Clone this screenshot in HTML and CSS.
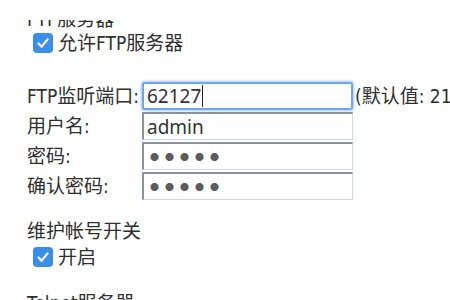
FILE: index.html
```html
<!DOCTYPE html>
<html lang="zh-CN">
<head>
    <meta charset="UTF-8">
    <title>服务器设置</title>
    <link rel="stylesheet" href="styles.css">
</head>
<body>
    <div class="top-cover"></div>
    <div class="page">
        <!-- FTP -->
        <div class="section-title">FTP服务器</div>
        <label class="check-row">
            <span class="check"><svg viewBox="0 0 20 20" width="20" height="20"><path d="M5.5 10.5 L8.6 13.6 L14.6 6.4" fill="none" stroke="#fff" stroke-width="2.2" stroke-linecap="round" stroke-linejoin="round"/></svg></span>
            允许FTP服务器
        </label>

        <div class="form">
            <div class="label">FTP监听端口:</div>
            <div class="field focused"><span class="value">62127</span><span class="caret"></span></div>
            <div class="hint">(默认值: 21)</div>

            <div class="label">用户名:</div>
            <div class="field"><span class="value">admin</span></div>
            <div></div>

            <div class="label">密码:</div>
            <div class="field"><span class="dots">●●●●●</span></div>
            <div></div>

            <div class="label">确认密码:</div>
            <div class="field"><span class="dots">●●●●●</span></div>
            <div></div>
        </div>

        <!-- 维护帐号 -->
        <div class="section-title second">维护帐号开关</div>
        <label class="check-row tight">
            <span class="check"><svg viewBox="0 0 20 20" width="20" height="20"><path d="M5.5 10.5 L8.6 13.6 L14.6 6.4" fill="none" stroke="#fff" stroke-width="2.2" stroke-linecap="round" stroke-linejoin="round"/></svg></span>
            开启
        </label>

        <div class="section-title third">Telnet服务器</div>
    </div>
</body>
</html>
```

FILE: styles.css
```css
* {
    margin: 0;
    padding: 0;
    box-sizing: border-box;
}

body {
    background: #fff;
    color: #2e2e2e;
    font-family: "DejaVu Sans Condensed", "Noto Sans CJK SC", sans-serif;
    font-size: 19px;
    line-height: 22px;
    overflow: hidden;
    height: 300px;
}

.top-cover {
    position: fixed;
    top: 0;
    left: 0;
    right: 0;
    height: 20px;
    background: #fff;
    z-index: 2;
}

.page {
    padding: 8px 0 0 27px;
    white-space: nowrap;
}

.check-row {
    display: flex;
    align-items: center;
    gap: 5px;
    margin: 2px 0 0 6px;
    height: 22px;
}

.check {
    width: 20px;
    height: 20px;
    border-radius: 4px;
    background: #3b8ee8;
    display: flex;
}

.form {
    display: grid;
    grid-template-columns: 115px 211px auto;
    row-gap: 2px;
    margin-top: 28px;
    align-items: center;
}

.label {
    height: 28px;
    line-height: 28px;
}

.field {
    height: 28px;
    border-style: solid;
    border-width: 2px 1px 1px 2px;
    border-color: #8a929e #cbd8e8 #cbd8e8 #8a929e;
    background: #fff;
    padding-left: 3px;
    display: flex;
    align-items: center;
    color: #333;
    font-family: "Noto Sans", "Noto Sans CJK SC", sans-serif;
    font-size: 19px;
}

.field.focused {
    border: 2px solid #6ea6ec;
    border-radius: 3px;
    box-shadow: 0 0 3px 1px rgba(110, 166, 236, 0.6);
}

.caret {
    width: 1px;
    height: 22px;
    background: #222;
    margin-left: 1px;
}

.dots {
    font-size: 9px;
    letter-spacing: 6px;
    color: #5c5c5c;
    padding-left: 3px;
}

.hint {
    padding-left: 2px;
}

.section-title.second {
    margin-top: 20px;
}

.check-row.tight {
    margin-top: 4px;
}

.section-title.third {
    margin-top: 24px;
}
```
